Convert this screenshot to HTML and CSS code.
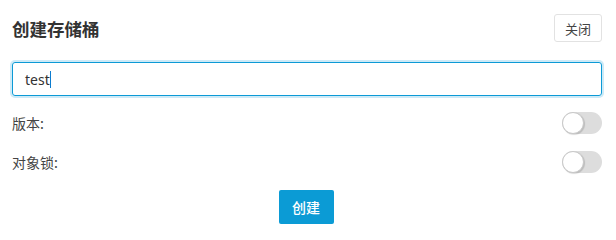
FILE: index.html
```html
<!DOCTYPE html>
<html lang="zh">
<head>
<meta charset="utf-8">
<link rel="stylesheet" href="styles.css">
</head>
<body>
<div class="dialog">
  <div class="header">
    <div class="title">创建存储桶</div>
    <button class="close">关闭</button>
  </div>
  <div class="input"><span class="value">test</span><span class="caret"></span></div>
  <div class="row">
    <span class="label">版本:</span>
    <span class="toggle"><span class="knob"></span></span>
  </div>
  <div class="row">
    <span class="label">对象锁:</span>
    <span class="toggle"><span class="knob"></span></span>
  </div>
  <div class="footer">
    <button class="create">创建</button>
  </div>
</div>
</body>
</html>
```
FILE: styles.css
```css
html, body {
  margin: 0;
  padding: 0;
  background: #fff;
}
body {
  font-family: "Noto Sans", "Noto Sans CJK SC", sans-serif;
  color: #333;
}
.dialog {
  width: 616px;
  height: 236px;
  box-sizing: border-box;
  padding: 14px 14px 0 12px;
  display: flex;
  flex-direction: column;
}
.header {
  display: flex;
  justify-content: space-between;
  align-items: center;
  height: 28px;
}
.title {
  font-size: 17.5px;
  font-weight: 700;
  color: #333;
  font-family: "Noto Sans CJK SC", sans-serif;
}
.close {
  height: 28px;
  width: 48px;
  padding: 0;
  border: 1px solid #e2e2e2;
  border-radius: 3px;
  background: #fff;
  font-family: "Noto Sans CJK SC", sans-serif;
  font-size: 13px;
  color: #444;
}
.input {
  margin-top: 20px;
  height: 34px;
  box-sizing: border-box;
  border: 1px solid #0c9ad6;
  border-radius: 3px;
  box-shadow: 0 0 0 2px #cdeaf7;
  display: flex;
  align-items: center;
  padding-left: 12px;
  font-size: 14px;
  color: #333;
}
.caret {
  display: inline-block;
  width: 1px;
  height: 17px;
  background: #0c7ccf;
}
.row {
  display: flex;
  justify-content: space-between;
  align-items: center;
  height: 24px;
}
.input + .row {
  margin-top: 15px;
}
.row + .row {
  margin-top: 15px;
}
.label {
  font-family: "Noto Sans CJK SC", sans-serif;
  font-size: 14px;
  color: #444;
}
.toggle {
  position: relative;
  width: 40px;
  height: 22px;
  border-radius: 11px;
  background: #dddddd;
}
.knob {
  position: absolute;
  left: 0;
  top: 0;
  width: 22px;
  height: 22px;
  box-sizing: border-box;
  border-radius: 50%;
  background: #fff;
  border: 1px solid #c8c8c8;
  box-shadow: 1px 1px 1px rgba(0,0,0,0.15);
}
.footer {
  display: flex;
  justify-content: center;
  margin-top: 16px;
}
.create {
  width: 55px;
  height: 34px;
  padding: 0;
  border: none;
  border-radius: 2px;
  background: #0b9bd5;
  color: #fff;
  font-family: "Noto Sans CJK SC", sans-serif;
  font-size: 14px;
  font-weight: 500;
  margin-right: 2px;
}
```
